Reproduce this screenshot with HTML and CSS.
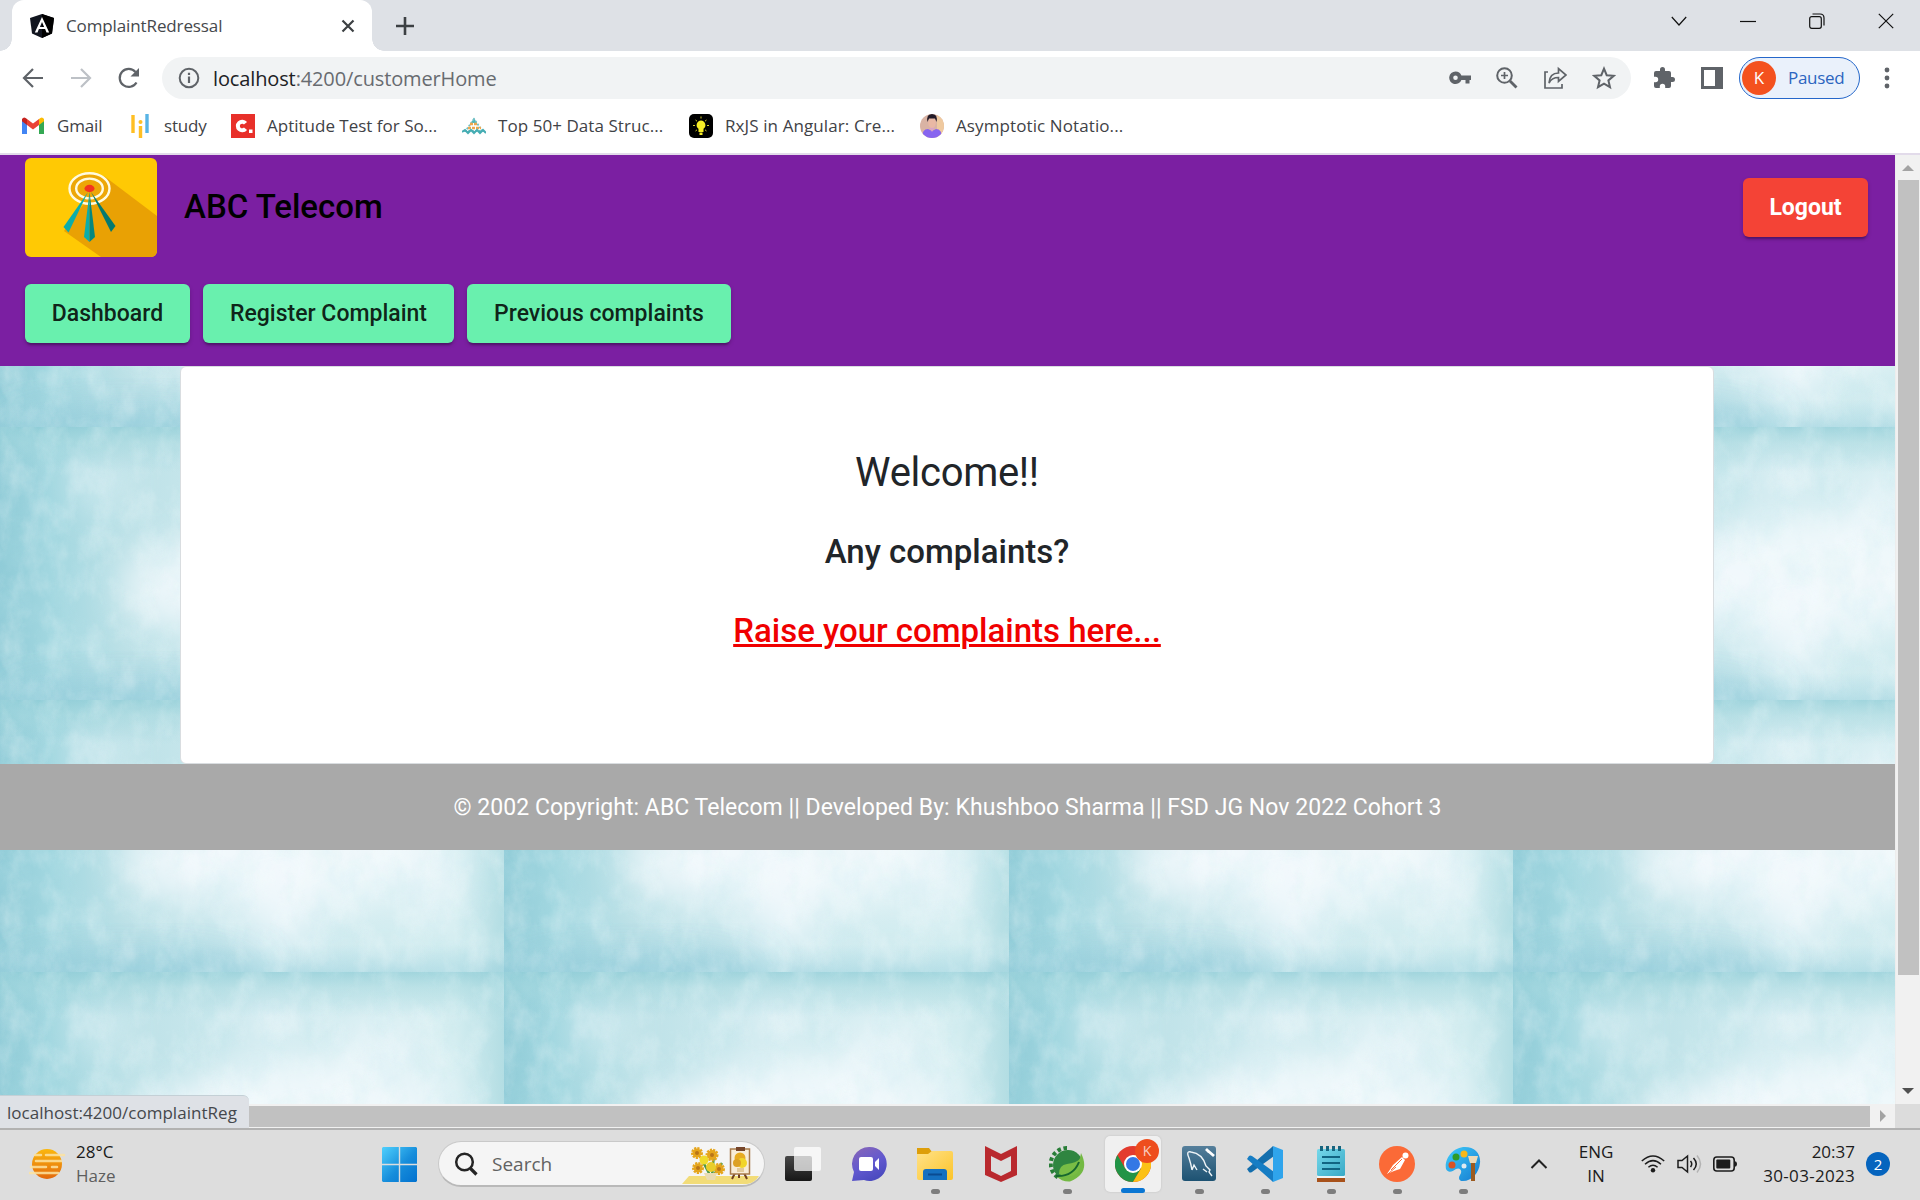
FILE: index.html
```html
<!DOCTYPE html>
<html lang="en">
<head>
<meta charset="utf-8">
<title>ComplaintRedressal</title>
<link rel="stylesheet" href="styles.css">
</head>
<body>
<div class="screen">
  <header class="tabstrip">
    <div class="tab">
      <svg class="tab-icon" width="24" height="24" viewBox="0 0 24 24"><path d="M12 0 0 4l2 15.500L12 24l10-4.500L24 4z" fill="#11151f"/><path d="M12 0v24l10-4.500L24 4z" fill="#000"/><path d="M12 3 4.800 18.500h2.700l1.400-3.500h6.200l1.400 3.500h2.700zm0 5 2.100 5H9.900z" fill="#fff"/></svg>
      <span class="ui tab-title">ComplaintRedressal</span>
      <svg class="tab-close" width="14" height="14" viewBox="0 0 14 14"><path d="m1.500 1.500 11 11m0-11-11 11" stroke="#3c4043" stroke-width="2.200"/></svg>
    </div>
    <svg class="new-tab" width="18" height="18" viewBox="0 0 18 18"><path d="M9 0v18M0 9h18" stroke="#3c4043" stroke-width="2.600"/></svg>
    <div class="window-buttons">
      <svg width="16" height="16" viewBox="0 0 16 16"><path d="m.8 4 7.200 8 7.200-8"/></svg>
      <svg width="16" height="16" viewBox="0 0 16 16"><path d="M0 8.500h16"/></svg>
      <svg width="16" height="16" viewBox="0 0 16 16"><rect x=".7" y="3.700" width="11.600" height="11.600" rx="2"/><path d="M3.500 1H11q4 0 4 4v7.500"/></svg>
      <svg width="16" height="16" viewBox="0 0 16 16"><path d="m.8.8 14.400 14.400m0-14.400L.8 15.200"/></svg>
    </div>
  </header>

  <div class="toolbar">
    <div class="nav-buttons">
      <svg width="22" height="22" viewBox="0 0 22 22" stroke="#5f6368"><path d="M21 11H2.500M11 2l-9 9 9 9"/></svg>
      <svg width="22" height="22" viewBox="0 0 22 22" stroke="#bdc1c6"><path d="M1 11h18.500M11 2l9 9-9 9"/></svg>
      <svg width="22" height="22" viewBox="0 0 22 22" stroke="#5f6368"><path d="M18.500 15.500A9 9 0 1 1 17.500 5"/><path d="M21 1v8.500h-8.500z" fill="#5f6368" stroke="none"/></svg>
    </div>
    <div class="address">
      <svg width="22" height="22" viewBox="0 0 22 22"><circle cx="11" cy="11" r="9.300" fill="none" stroke="#5f6368" stroke-width="2"/><path d="M11 9.500V16M11 5.800v2.300" stroke="#5f6368" stroke-width="2.200"/></svg>
      <span class="ui url"><b>localhost</b>:4200/customerHome</span>
      <div class="address-icons">
        <svg width="22" height="22" viewBox="0 0 22 22"><path fill="#5f6368" fill-rule="evenodd" d="M6.500 4.500a6.300 6.300 0 1 0 5.900 8.500h4.100v3.500h4V13H22V8.500h-9.600a6.300 6.300 0 0 0-5.900-4zm0 4a2.300 2.300 0 1 1 0 4.600 2.300 2.300 0 0 1 0-4.600z"/></svg>
        <svg width="22" height="22" viewBox="0 0 22 22" fill="none" stroke="#5f6368" stroke-width="2"><circle cx="8.500" cy="8.500" r="7.300"/><path d="m14 14 6.500 6.500" stroke-width="2.800"/><path d="M8.500 5v7M5 8.500h7" stroke-width="1.700"/></svg>
        <svg width="24" height="24" viewBox="0 0 24 24" fill="none" stroke="#5f6368" stroke-width="1.700"><path d="M5 6H2v16h17v-4"/><path d="M6 17c.5-7 4-10 9.500-10V2.500L23 9l-7.500 6.500v-4C11 11.500 8 13 6 17z"/></svg>
        <svg width="24" height="24" viewBox="0 0 24 24"><path fill="none" stroke="#5f6368" stroke-width="2" d="m12 2.700 2.700 6.500 7 .6-5.300 4.600 1.600 6.800-6-3.600-6 3.600 1.600-6.800-5.300-4.600 7-.6z"/></svg>
      </div>
    </div>
    <svg class="puzzle" width="24" height="24" viewBox="0 0 24 24"><path fill="#5f6368" d="M20.500 11H19V7a2 2 0 0 0-2-2h-4V3.500a2.500 2.500 0 0 0-5 0V5H4a2 2 0 0 0-2 2v3.800h1.500a2.700 2.700 0 0 1 0 5.400H2V20a2 2 0 0 0 2 2h3.800v-1.500a2.700 2.700 0 0 1 5.400 0V22H17a2 2 0 0 0 2-2v-4h1.500a2.500 2.500 0 0 0 0-5z"/></svg>
    <svg class="panel" width="22" height="22" viewBox="0 0 22 22"><path fill="#5f6368" fill-rule="evenodd" d="M0 0h22v22H0zM3 3v16h11V3z"/></svg>
    <div class="profile"><span class="ui avatar">K</span><span class="ui paused">Paused</span></div>
    <svg class="menu" width="6" height="22" viewBox="0 0 6 22" fill="#5f6368"><circle cx="3" cy="3" r="2.400"/><circle cx="3" cy="11" r="2.400"/><circle cx="3" cy="19" r="2.400"/></svg>
  </div>

  <nav class="bookmarks ui">
    <span class="bookmark bm-gmail"><svg width="24" height="24" viewBox="0 0 24 24"><path d="M1 6v14h5V9z" fill="#4285f4"/><path d="M18 9v11h5V6z" fill="#34a853"/><path d="M18 5v6l5-3.800V5q-2-3-5 0z" fill="#fbbc04"/><path d="M6 5v6l6 4.600 6-4.600V5l-6 4.600z" fill="#ea4335"/><path d="M1 5v2.200L6 11V5Q3 2 1 5z" fill="#c5221f"/></svg><span>Gmail</span></span>
    <span class="bookmark bm-study"><svg width="24" height="24" viewBox="0 0 24 24"><path d="M5 1v18M12.500 12v12" stroke="#ffbf24" stroke-width="3.400"/><path d="M19 0v19" stroke="#58b4e5" stroke-width="3.400"/><circle cx="12.500" cy="8" r="2" fill="#ffbf24"/></svg><span>study</span></span>
    <span class="bookmark bm-apt"><svg width="24" height="24" viewBox="0 0 24 24"><path d="M0 0h24v24H0z" fill="#e8302a"/><path d="M14.500 9.300a4.300 4.300 0 1 0 0 5.400" fill="none" stroke="#fff" stroke-width="4"/><path d="M18 15.500h3.500V19H18z" fill="#fff"/></svg><span>Aptitude Test for So...</span></span>
    <span class="bookmark bm-top"><svg width="24" height="24" viewBox="0 0 24 24"><path d="m12 4-3 5h6z" fill="#4bb7bd"/><path d="M12 5 3.500 17h17z" fill="none" stroke="#70bfc4" stroke-width="1.800" stroke-dasharray="2 1.500"/><path d="M6 14h13M8 10h8" stroke="#eda84d" stroke-width="2.700" stroke-dasharray="3 1"/><path d="m0 18 3-2 3 3 3-3 3 3 3-3 3 3 3-3 3 3" fill="none" stroke="#45adb3" stroke-width="2"/></svg><span>Top 50+ Data Struc...</span></span>
    <span class="bookmark bm-rx"><svg width="24" height="24" viewBox="0 0 24 24"><rect width="24" height="24" rx="5"/><path d="M12 6.500a4.600 4.600 0 0 0-2.500 8.300V18h5v-3.200A4.600 4.600 0 0 0 12 6.500zM10.500 18.500h3V21h-3z" fill="#f7ee27"/><path d="M12 2.500v2M4 11.500h2m12 0h2M6.500 6 8 7.200M17.500 6 16 7.200M6.500 17 8 15.800m9.500 1.200L16 15.800" stroke="#d5d02b"/></svg><span>RxJS in Angular: Cre...</span></span>
    <span class="bookmark bm-asym"><svg width="24" height="24" viewBox="0 0 24 24"><defs><clipPath id="face"><circle cx="12" cy="12" r="12"/></clipPath></defs><g clip-path="url(#face)"><path d="M0 0h24v24H0z" fill="#d9b3a4"/><path d="M17 0h7v24h-7z" fill="#efc99f"/><path d="M2 24q0-9 6-9l4 2 4-2q6 0 6 9z" fill="#8764ef"/><path d="m9 12 3 6 3-6z" fill="#d9a3c9"/><ellipse cx="12" cy="8.500" rx="3.800" ry="5.500" fill="#e9b8a4"/><path d="M7.500 8q-1.500-8 4.500-8t4.500 8L15 4.500H9z" fill="#241b28"/></g></svg><span>Asymptotic Notatio...</span></span>
  </nav>

  <div class="viewport">
    <main class="page">
      <section class="app-header">
        <div class="brand-row">
          <svg class="logo" width="132" height="99" viewBox="0 0 132 99"><path d="M0 0h132v99H0z" fill="#ffc904"/><path d="M79 18 132 58v41H76L39 73z" fill="#e9a104"/><ellipse cx="64.500" cy="30.500" rx="20" ry="15" fill="#eda707"/><ellipse cx="64.500" cy="30.500" rx="20" ry="15.200" fill="none" stroke="#fffbe0" stroke-width="2.400"/><ellipse cx="64.500" cy="30.500" rx="13.300" ry="9.900" fill="none" stroke="#fffbe0" stroke-width="2.400"/><path d="m63 34-24.500 35 5 5.500z" fill="#0cadaa"/><path d="m66 34 24.500 34-4.500 6z" fill="#05796f"/><path d="m64.500 34-5.500 45 5.500 5z" fill="#0cadaa"/><path d="m64.500 34 5.500 45-5.500 5z" fill="#05877f"/><ellipse cx="64.500" cy="30.500" rx="5" ry="3.700" fill="#f3361f"/></svg>
          <h1 class="brand"><span>ABC Telecom</span></h1>
          <button class="btn logout"><span>Logout</span></button>
        </div>
        <div class="nav-row">
          <button class="btn b1"><span>Dashboard</span></button>
          <button class="btn b2"><span>Register Complaint</span></button>
          <button class="btn b3"><span>Previous complaints</span></button>
        </div>
      </section>
      <section class="card">
        <h2 class="welcome"><span>Welcome!!</span></h2>
        <h3 class="ask"><span>Any complaints?</span></h3>
        <a class="raise" href="#"><span>Raise your complaints here...</span></a>
      </section>
      <footer class="footer"><span>© 2002 Copyright: ABC Telecom || Developed By: Khushboo Sharma || FSD JG Nov 2022 Cohort 3</span></footer>
    </main>
    <div class="vscroll">
      <i class="arrow up"></i><i class="vthumb"></i><i class="arrow down"></i>
    </div>
    <div class="hscroll"><i class="hthumb"></i><i class="arrow right"></i></div>
    <div class="corner"></div>
    <div class="status ui"><span>localhost:4200/complaintReg</span></div>
  </div>

  <footer class="taskbar ui">
    <div class="weather">
      <svg width="38" height="32" viewBox="0 0 38 32"><defs><linearGradient id="sun" x2="0" y2="1"><stop stop-color="#fbb80d"/><stop offset="1" stop-color="#e2680d"/></linearGradient></defs><circle cx="18" cy="16" r="15" fill="url(#sun)"/><path d="M6 7h6m5 0h18M7 13h25M2 19h15m6 0h5M1 25h28" stroke="#fde3a0" stroke-width="2.600" stroke-linecap="round" opacity=".85"/></svg>
      <div class="two-lines"><span class="dark">28°C</span><span class="muted">Haze</span></div>
    </div>
    <svg class="start" width="35" height="35" viewBox="0 0 35 35"><defs><linearGradient id="win" x2="1" y2="1"><stop stop-color="#4fd0fd"/><stop offset=".55" stop-color="#168ddb"/><stop offset="1" stop-color="#0271cf"/></linearGradient></defs><path d="M1 0h15.800v16.800H0V1zM18.200 0H34l1 1v15.800H18.200zM0 18.200h16.800V35H1l-1-1zM18.200 18.200H35V34l-1 1H18.200z" fill="url(#win)"/></svg>
    <div class="search">
      <svg width="24" height="24" viewBox="0 0 24 24"><circle cx="10.500" cy="10" r="8.300" fill="none" stroke="#252525" stroke-width="2.500"/><path d="m16.500 16.500 6 6" stroke="#252525" stroke-width="3.200"/></svg>
      <span>Search</span>
      <svg class="art" width="78" height="42" viewBox="0 0 78 42"><path d="m0 41 7-8h70q-4 7-12 8z" fill="#f2dc78"/><path d="M29 34 20 17m10 16 2-22m-1 22 9-13" stroke="#4c9847" stroke-width="2.500"/><g fill="#e5a51c" stroke="#e5a51c" stroke-width="3" stroke-dasharray="2 1"><circle cx="15" cy="10" r="4.500"/><circle cx="30" cy="12" r="5"/><circle cx="16" cy="25" r="4.500"/><circle cx="37" cy="26" r="4.500"/></g><circle cx="22" cy="17" r="4.500" fill="#efdb2c"/><circle cx="29" cy="24" r="5" fill="#e9cd2b"/><g fill="#b97418"><circle cx="15" cy="10" r="2"/><circle cx="30" cy="12" r="2"/><circle cx="16" cy="25" r="2"/><circle cx="37" cy="26" r="2"/></g><path d="M22 30h13l-2 7h-8z" fill="#e9dbb2"/><path d="M50 36 53 30m12 6-3-6m-5 0v5" stroke="#70401f" stroke-width="2"/><path d="M48.500 6h19v25h-19z" fill="#f8ecd7" stroke="#a87b4b" stroke-width="1.500"/><path d="M54 4h9v4h-9z" fill="#75452a"/><circle cx="58" cy="15" r="5.500" fill="#e7ab22"/><circle cx="60" cy="20" r="5" fill="#f1d52a"/><circle cx="55" cy="20" r="4" fill="#dda024"/><path d="M55 25h7v4h-7z" fill="#e1c99c"/></svg>
    </div>
    <div class="apps">
      <div class="app"><svg width="36" height="36" viewBox="0 0 36 36"><defs><linearGradient id="tv" x2="0" y2="1"><stop stop-color="#474747"/><stop offset="1" stop-color="#171717"/></linearGradient></defs><rect y="10" width="27" height="25" rx="2" fill="url(#tv)"/><rect x="9" y="1" width="27" height="24" rx="2" fill="#fff" opacity=".72"/></svg></div>
      <div class="app"><svg width="36" height="36" viewBox="0 0 36 36"><defs><linearGradient id="chat" x2=".5" y2="1"><stop stop-color="#8a67b5"/><stop offset=".6" stop-color="#6259cf"/><stop offset="1" stop-color="#4c4bc0"/></linearGradient></defs><path d="M18 1a17 17 0 1 1-5 33L1 35l2-9A17 17 0 0 1 18 1z" fill="url(#chat)"/><rect x="8" y="11" width="14" height="14" rx="2" fill="#fff"/><path d="m24 16 4-4v12l-4-4z" fill="#fff"/></svg></div>
      <div class="app open"><svg width="36" height="36" viewBox="0 0 36 36"><defs><linearGradient id="fold" x2="1" y2="1"><stop stop-color="#ffe28a"/><stop offset="1" stop-color="#fcc429"/></linearGradient></defs><path d="M0 2h12l3 4-4 4H0z" fill="#dd9e0a"/><path d="M0 8h11l4-3h19q2 0 2 2v25q0 2-2 2H2q-2 0-2-2z" fill="url(#fold)"/><path d="M6 34V26q0-3 3-3h18q3 0 3 3v8z" fill="#1570c0"/><path d="M11 28.500h14" stroke="#0a4b91" stroke-width="2"/></svg></div>
      <div class="app"><svg width="36" height="36" viewBox="0 0 36 36"><path fill="#b9292e" fill-rule="evenodd" d="m2 0 16 8 16-8v29l-16 7-16-7zm6 10v15l10 5 10-5V10l-10 5z"/></svg></div>
      <div class="app open"><svg width="36" height="36" viewBox="0 0 36 36"><path d="M18 2a16 16 0 0 0-8 30" fill="none" stroke="#287d37" stroke-width="4" stroke-dasharray="3.600 2.600"/><circle cx="19" cy="19" r="15" fill="#2f8540"/><path d="M32 7q10 20-11 28.500-8 .5-14-5.500 22-1 25-23z" fill="#73b943"/><path d="M31 13q2 12-6 16-7 3-15-1 0-9 8-10 9-1 13-5z" fill="#79bd45"/><path d="M7 30q17 1 23-14" fill="none" stroke="#17682f" stroke-width="2"/></svg></div>
      <div class="app active"><svg width="36" height="36" viewBox="0 0 36 36"><circle cx="18" cy="18" r="18" fill="#e33b2e"/><path d="M2.400 9A18 18 0 0 0 18 36l8-13.500H10.200z" fill="#229447"/><path d="M18 36A18 18 0 0 0 33.600 9H18l8 13.500z" fill="#fbc116"/><circle cx="18" cy="18" r="9" fill="#fff"/><circle cx="18" cy="18" r="7" fill="#3478e5"/></svg><span class="app-badge">K</span></div>
      <div class="app open"><svg width="36" height="36" viewBox="0 0 36 36"><defs><linearGradient id="sql" x2="0" y2="1"><stop stop-color="#557f9b"/><stop offset="1" stop-color="#1d5272"/></linearGradient></defs><rect x="1" width="34" height="35" rx="3" fill="url(#sql)"/><path d="M11 24c-1-6-2-9-3-12-2-4-2-7 2-6 8 1 13 7 15 14l4 4-1 2 3 4m-5-4-4-3m-11 1 2-5 3 5" fill="none" stroke="#eef4f7" stroke-width="1.400"/><path d="m26 4 7 6M25 3l3 3" stroke="#fff" stroke-width="2.800"/></svg></div>
      <div class="app open"><svg width="36" height="36" viewBox="0 0 36 36"><path d="M26 0 0 23l2 3q1 1 3 0L27 10z" fill="#136ead"/><path d="M26 36 0 13l2-3q1-1 3 0l22 16z" fill="#167dc4"/><path d="m26 0 10 4v28l-10 4z" fill="#2fa4ec"/></svg></div>
      <div class="app open"><svg width="36" height="36" viewBox="0 0 36 36"><defs><linearGradient id="note" x2="1" y2="1"><stop stop-color="#76d8ea"/><stop offset="1" stop-color="#38a9c6"/></linearGradient></defs><path d="M4 31h28v5H4z" fill="#a8521b"/><path d="M4 29h28v3H4z" fill="#f2f5f5"/><rect x="4" y="3" width="28" height="27" rx="1.500" fill="url(#note)"/><path d="M9 11h18M9 17h18M9 23h18" stroke="#116482" stroke-width="2"/><path d="M8.500 0v5m6-5v5m6-5v5m6-5v5" stroke="#17657f" stroke-width="3"/></svg></div>
      <div class="app open"><svg width="36" height="36" viewBox="0 0 36 36"><circle cx="18" cy="18" r="18" fill="#fb6a37"/><circle cx="26.500" cy="9.500" r="3" fill="#fff"/><path d="m8 28 6-9 9-8 3 3-5 9-6 2z" fill="#fff"/><path d="m12 24 11-11M17 21l-8 7" stroke="#fb6a37"/></svg></div>
      <div class="app open"><svg width="36" height="36" viewBox="0 0 36 36"><defs><linearGradient id="pal" x2="1" y2="1"><stop stop-color="#40cdfb"/><stop offset="1" stop-color="#157bd0"/></linearGradient></defs><path d="M20 1c10 0 16 7 15 16-1 10-8 18-17 18-4 0-5-3-3-6 3-4 0-8-4-6-4 3-8 4-10 0C-1 13 8 1 20 1z" fill="url(#pal)"/><circle cx="7" cy="19" r="3.500" fill="#d95324"/><circle cx="11" cy="11" r="3.500" fill="#2e9b27"/><circle cx="19" cy="8" r="3.500" fill="#f8b81a"/><circle cx="19" cy="20" r="2.500" fill="#dfeaf1"/><path d="M28 17v18" stroke="#9c5b20" stroke-width="4"/><path d="M23 10h10l-2 7h-6z" fill="#ebd9b9"/></svg></div>
    </div>
    <svg class="tray-up" width="18" height="12" viewBox="0 0 18 12"><path d="m1.500 10 7.500-7.500L16.500 10" fill="none" stroke="#222" stroke-width="2"/></svg>
    <div class="two-lines lang dark"><span>ENG</span><span>IN</span></div>
    <svg class="wifi" width="24" height="18" viewBox="0 0 24 18" fill="none" stroke="#1c1c1c" stroke-width="1.500"><path d="M.8 6Q12-4 23.200 6M4 9.200q8-7.200 16 0M7.400 12.200q4.600-4 9.200 0"/><circle cx="12" cy="15.200" r="2.200" fill="#1c1c1c" stroke="none"/></svg>
    <svg class="sound" width="25" height="20" viewBox="0 0 25 20" fill="none" stroke="#1c1c1c" stroke-width="1.500"><path d="M1 6.500h4L10.500 2v16L5 13.500H1z"/><path d="M13.500 7q2.500 3 0 6M16.500 4q5.500 6 0 12"/><path d="M20 1.500q7 8.500 0 17" stroke="#b3b3b3"/></svg>
    <svg class="battery" width="25" height="16" viewBox="0 0 25 16"><rect x=".8" y="1" width="20.400" height="14" rx="3" fill="none" stroke="#1c1c1c" stroke-width="1.600"/><rect x="3.300" y="3.500" width="14" height="9" rx="1" fill="#1c1c1c"/><path d="M22 5.500h1q2 2.500 0 5h-1z" fill="#1c1c1c"/></svg>
    <div class="two-lines clock dark"><span>20:37</span><span class="date">30-03-2023</span></div>
    <span class="notice">2</span>
  </footer>
</div>
</body>
</html>
```
FILE: styles.css
```css
* { box-sizing: border-box; }
body { margin: 0; overflow: hidden; font-family: Roboto, sans-serif; }
svg { display: block; flex: none; }
h1, h2, h3 { margin: 0; font-weight: 500; }
.ui { font-family: "Open Sans", "Noto Sans", sans-serif; white-space: nowrap; }
.screen { width: 1920px; height: 1200px; display: flex; flex-direction: column; background: #fff; }

/* Browser tab strip */
.tabstrip { height: 51px; flex: none; display: flex; align-items: flex-start; background: #dee1e6; }
.tab { position: relative; width: 360px; height: 51px; margin-left: 12px; padding: 0 17px 0 18px; display: flex; align-items: center; background: #fff; border-radius: 12px 12px 0 0; }
.tab::before, .tab::after { content: ""; position: absolute; bottom: 0; width: 12px; height: 12px; }
.tab::before { left: -12px; background: radial-gradient(circle at 0 0, transparent 11.5px, #fff 12px); }
.tab::after { right: -12px; background: radial-gradient(circle at 100% 0, transparent 11.5px, #fff 12px); }
.tab-title { margin-left: 12px; font-size: 17px; letter-spacing: -.12px; color: #45484c; }
.tab-close { margin-left: auto; }
.new-tab { margin: 17px 0 0 24px; }
.window-buttons { margin: 13px 26px 0 auto; display: flex; gap: 53px; fill: none; stroke: #111; stroke-width: 1.2; }

/* Toolbar */
.toolbar { height: 54px; flex: none; display: flex; align-items: center; }
.nav-buttons { display: flex; gap: 26px; padding-left: 22px; width: 162px; fill: none; stroke-width: 2.200; }
.address { width: 1469px; height: 42px; display: flex; align-items: center; padding: 0 15px 0 16px; border-radius: 21px; background: #f1f3f4; }
.url { margin-left: 13px; font-size: 20px; letter-spacing: -.13px; color: #686b70; }
.url b { font-weight: 400; color: #202124; }
.address-icons { margin-left: auto; display: flex; align-items: center; gap: 25px; }
.puzzle { margin-left: 21px; }
.panel { margin-left: 25px; }
.profile { margin-left: 16px; width: 121px; height: 42px; display: flex; align-items: center; padding-left: 2px; border: 1.500px solid #2567ca; border-radius: 21px; background: #eaf1fb; }
.avatar { width: 34px; height: 34px; line-height: 34px; border-radius: 50%; background: #f4511e; color: #fff; font-size: 17px; text-align: center; }
.paused { margin: -2px 0 0 12px; font-size: 17px; letter-spacing: -.3px; color: #2c65c0; }
.menu { margin-left: 24px; }

/* Bookmarks */
.bookmarks { height: 50px; flex: none; display: flex; align-items: center; padding: 0 0 7px 21px; border-bottom: 2px solid #e2dbea; font-size: 17px; color: #3f4246; }
.bookmark { display: flex; align-items: center; gap: 12px; }
.bm-gmail { width: 107px; letter-spacing: -.15px; }
.bm-study { width: 103px; letter-spacing: -.2px; }
.bm-apt { width: 231px; }
.bm-top { width: 227px; letter-spacing: .06px; }
.bm-rx { width: 231px; letter-spacing: .1px; }
.bm-asym { letter-spacing: .1px; }

/* Web page area */
.viewport { position: relative; height: 973px; flex: none; display: grid; grid-template: 949px 24px / 1895px 25px; }
.page {
  overflow: hidden; background-color: #c9e8ed; background-size: 504.500px 272.300px;
  background-image: url("data:image/svg+xml,%3Csvg xmlns='http://www.w3.org/2000/svg' width='504.5' height='272.3' viewBox='0 0 504.5 272.3' preserveAspectRatio='none'%3E%3Cdefs%3E%3ClinearGradient id='a'%3E%3Cstop stop-color='%238fcbd7'/%3E%3Cstop offset='.1' stop-color='%23a2d7e0'/%3E%3Cstop offset='.25' stop-color='%23bce1e7'/%3E%3Cstop offset='.5' stop-color='%23cfeaef'/%3E%3Cstop offset='.9' stop-color='%23d3edf0'/%3E%3Cstop offset='1' stop-color='%23b2dde3'/%3E%3C/linearGradient%3E%3ClinearGradient id='t' x2='0' y2='1'%3E%3Cstop stop-color='%238ccbd5'/%3E%3Cstop offset='.35' stop-color='%239bd3da' stop-opacity='.6'/%3E%3Cstop offset='1' stop-color='%2394cfd8' stop-opacity='0'/%3E%3C/linearGradient%3E%3ClinearGradient id='b' x1='0' y1='1' x2='0' y2='0'%3E%3Cstop stop-color='%2398cfdc'/%3E%3Cstop offset='1' stop-color='%2398cfdc' stop-opacity='0'/%3E%3C/linearGradient%3E%3Cfilter id='f' x='-50%25' y='-50%25' width='200%25' height='200%25'%3E%3CfeGaussianBlur stdDeviation='18'/%3E%3C/filter%3E%3Cfilter id='n' x='0' y='0' width='100%25' height='100%25'%3E%3CfeTurbulence type='fractalNoise' baseFrequency='.035 .025' numOctaves='5' seed='8'/%3E%3CfeColorMatrix values='0 0 0 0 .5 0 0 0 0 .78 0 0 0 0 .83 2 0 0 0 -.85'/%3E%3C/filter%3E%3Cfilter id='w' x='0' y='0' width='100%25' height='100%25'%3E%3CfeTurbulence type='fractalNoise' baseFrequency='.045 .03' numOctaves='5' seed='3'/%3E%3CfeColorMatrix values='0 0 0 0 .94 0 0 0 0 .98 0 0 0 0 .99 2 0 0 0 -.85'/%3E%3C/filter%3E%3C/defs%3E%3Cpath fill='url(%23a)' d='M0 0h505v273H0z'/%3E%3Cg fill='%23f3f9fd' filter='url(%23f)'%3E%3Cellipse cx='300' cy='150' rx='130' ry='62' opacity='.9'/%3E%3Cellipse cx='180' cy='160' rx='60' ry='42' opacity='.8'/%3E%3Cellipse cx='380' cy='75' rx='48' ry='35' opacity='.5'/%3E%3Cellipse cx='435' cy='160' rx='35' ry='70' opacity='.5'/%3E%3Cellipse cx='280' cy='205' rx='26' ry='50' opacity='.7'/%3E%3Cellipse cx='275' cy='40' rx='25' ry='20' opacity='.5'/%3E%3Cellipse cx='100' cy='55' rx='30' ry='28' opacity='.4'/%3E%3C/g%3E%3Cpath fill='url(%23t)' opacity='.7' d='M0 0h505v45H0z'/%3E%3Cellipse cx='130' cy='272' rx='130' ry='24' fill='%2398cfdc' opacity='.9' filter='url(%23f)'/%3E%3Cpath fill='url(%23b)' opacity='.5' d='M0 245h505v28H0z'/%3E%3Cpath filter='url(%23n)' opacity='.25' d='M0 0h505v273H0z'/%3E%3Cpath filter='url(%23w)' opacity='.3' d='M0 0h505v273H0z'/%3E%3C/svg%3E");
}
.app-header { height: 211px; padding: 3px 27px 0 25px; background: #7b1fa2; }
.brand-row { display: flex; }
.logo { border-radius: 6px; }
.brand { margin-left: 27px; height: 99px; line-height: 97px; font-size: 33px; color: #000; }
.btn { height: 59px; padding: 0; border: 0; border-radius: 6px; background: #69f0ae; color: rgba(0,0,0,.87); font: 500 23px Roboto, sans-serif; box-shadow: 0 4px 2px -2px rgba(0,0,0,.22), 0 2px 4px rgba(0,0,0,.2); }
.logout { margin: 20px 0 0 auto; width: 125px; background: #f44336; color: #fff; font-weight: 700; }
.nav-row { display: flex; gap: 13px; margin-top: 27px; }
.b1 { width: 165px; }
.b2 { width: 251px; }
.b3 { width: 264px; }
.card { width: 1534px; height: 398px; margin-left: 180px; display: flex; flex-direction: column; align-items: center; padding-top: 82px; border: 1px solid #d9dde0; border-radius: 6px; background: #fff; color: #212529; }
.welcome { font-size: 40px; font-weight: 400; letter-spacing: -.3px; line-height: 48px; }
.ask { margin-top: 35px; font-size: 33px; line-height: 40px; }
.raise { margin-top: 39px; font-size: 33px; line-height: 40px; font-weight: 500; color: #f00000; text-decoration-thickness: 3px; }
.footer { height: 86px; padding-top: 1px; line-height: 86px; text-align: center; background: #a9a9a9; color: #fff; font-size: 23px; letter-spacing: .04px; white-space: nowrap; }
.vscroll { display: flex; flex-direction: column; align-items: center; background: #f1f1f1; border-left: 1px solid #ededed; }
.arrow { border: 6px solid transparent; }
.up { margin-top: 4px; border-bottom-color: #a3a3a3; }
.vthumb { width: 21px; height: 795px; margin-top: 9px; background: #c1c1c1; }
.down { margin-top: 113px; border-top-color: #505050; }
.hscroll { display: flex; align-items: center; background: #f1f1f1; }
.hthumb { width: 1870px; height: 21px; background: #c1c1c1; }
.right { margin-left: 10px; border-left-color: #a3a3a3; }
.corner { background: #dcdcdc; }
.status { position: absolute; left: 0; bottom: 0; width: 249px; height: 33px; line-height: 34px; padding-left: 7px; border-top: 1px solid #c4d0d6; border-radius: 0 6px 0 0; background: #dee1e6; color: #45484c; font-size: 17px; letter-spacing: .03px; }

/* Taskbar */
.taskbar { height: 72px; display: flex; align-items: center; padding-bottom: 2px; border-top: 2px solid #b2b2b2; background: #dddddd; }
.weather { display: flex; align-items: center; gap: 9px; width: 354px; padding-left: 29px; }
.two-lines { display: flex; flex-direction: column; font-size: 17px; line-height: 24px; }
.dark { color: #1b1b1b; }
.muted { color: #5e5e5e; }
.start { margin-left: 28px; }
.search { width: 327px; height: 46px; margin-left: 21px; display: flex; align-items: center; padding-left: 15px; border: 1px solid #c9c9c9; border-bottom: 2px solid #b9b9b9; border-radius: 23px; background: #f5f5f5; overflow: hidden; font-size: 19px; color: #626262; }
.search span { margin-left: 14px; }
.art { margin: 0 4px 0 auto; }
.apps { display: flex; gap: 10px; margin-left: 10px; }
.app { position: relative; width: 56px; height: 56px; padding: 10px; border-radius: 5px; }
.active { background: #f0f0f0; box-shadow: 0 0 2px #bbb; }
.open::after, .active::after { content: ""; position: absolute; left: 23.500px; bottom: -2px; width: 9px; height: 5px; border-radius: 3px; background: #7d7d7d; }
.active::after { left: 16px; bottom: -1px; width: 24px; background: #0a76d3; }
.app-badge { position: absolute; left: 30px; top: 3px; width: 24px; height: 24px; border-radius: 50%; background: #ee4d1d; color: #f9d0c2; font-size: 14px; line-height: 24px; text-align: center; }
.tray-up { margin-left: 39px; }
.lang { width: 50px; margin-left: 23px; align-items: center; }
.wifi { margin-left: 20px; }
.sound { margin-left: 12px; }
.battery { margin-left: 11px; }
.clock { margin-left: 14px; width: 103px; align-items: flex-end; }
.date { letter-spacing: .3px; }
.notice { width: 24px; height: 24px; margin-left: 11px; border-radius: 50%; background: #0564be; color: #fff; font-size: 15px; line-height: 24px; text-align: center; }
```
